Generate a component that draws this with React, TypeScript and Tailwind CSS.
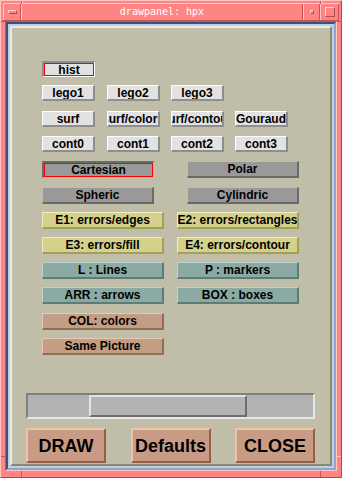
import React from "react";

type Tone = "light" | "gray" | "yellow" | "teal" | "tan";

// raised bevel per colour: face, light edge (top/left), dark edge (bottom/right)
const tones: Record<Tone, string> = {
    light: "bg-[#e2e2e2] border-t-white border-l-white border-b-[#8e8e8e] border-r-[#8e8e8e]",
    gray: "bg-[#999999] border-t-[#bcbcbc] border-l-[#bcbcbc] border-b-[#6a6a6a] border-r-[#6a6a6a]",
    yellow: "bg-[#d5d18b] border-t-[#efedc4] border-l-[#efedc4] border-b-[#a29f5a] border-r-[#a29f5a]",
    teal: "bg-[#8aaaa3] border-t-[#bcd3ce] border-l-[#bcd3ce] border-b-[#5c7c76] border-r-[#5c7c76]",
    tan: "bg-[#c49d85] border-t-[#e6c8b4] border-l-[#e6c8b4] border-b-[#956c55] border-r-[#956c55]",
};

const sunken: Record<Tone, string> = {
    light: "bg-[#e2e2e2] border-t-[#8e8e8e] border-l-[#8e8e8e] border-b-white border-r-white",
    gray: "bg-[#999999] border-t-[#6a6a6a] border-l-[#6a6a6a] border-b-[#bcbcbc] border-r-[#bcbcbc]",
    yellow: "",
    teal: "",
    tan: "",
};

function Btn({
    label,
    size,
    tone,
    selected = false,
}: {
    label: string;
    size: string;
    tone: Tone;
    selected?: boolean;
}) {
    if (selected) {
        return (
            <div className={`flex shrink-0 border-t-2 border-l-2 border-b border-r ${sunken[tone]} ${size}`}>
                <div className="flex flex-1 items-center justify-center overflow-hidden border border-[#ff0000]">
                    <span className="shrink-0 whitespace-nowrap text-[12px] font-bold leading-none text-black">{label}</span>
                </div>
            </div>
        );
    }
    return (
        <div
            className={`flex shrink-0 items-center justify-center overflow-hidden border-t border-l border-b-2 border-r-2 ${tones[tone]} ${size}`}
        >
            <span className="shrink-0 whitespace-nowrap text-[12px] font-bold leading-none text-black">{label}</span>
        </div>
    );
}

function BigBtn({ label }: { label: string }) {
    return (
        <div className="flex h-[35px] w-[80px] items-center justify-center border-2 border-t-[#e8c4ac] border-l-[#e8c4ac] border-b-[#965f45] border-r-[#965f45] bg-[#c89c84]">
            <span className="whitespace-nowrap text-[18px] font-bold leading-none text-black">{label}</span>
        </div>
    );
}

export default function App() {
    const small = "h-[16px] w-[53px]";
    return (
        <div className="relative flex h-[478px] w-[342px] flex-col border border-t-[#ffc6c6] border-l-[#ffc6c6] border-b-[#a84848] border-r-[#a84848] bg-[#ff8585] px-[2px] pt-[2px] pb-[6px] font-['Liberation_Sans',Arial,sans-serif]">
            {/* frame corner ticks */}
            <div className="absolute left-[20px] top-0 h-[3px] w-[1px] bg-[#c05656]" />
            <div className="absolute left-[21px] top-0 h-[3px] w-[1px] bg-[#ffc6c6]" />
            <div className="absolute left-[319px] top-0 h-[3px] w-[1px] bg-[#c05656]" />
            <div className="absolute left-[320px] top-0 h-[3px] w-[1px] bg-[#ffc6c6]" />
            <div className="absolute left-0 top-[20px] h-[1px] w-[4px] bg-[#c05656]" />
            <div className="absolute right-0 top-[20px] h-[1px] w-[4px] bg-[#c05656]" />
            <div className="absolute bottom-0 left-[20px] h-[6px] w-[1px] bg-[#c05656]" />
            <div className="absolute bottom-0 left-[319px] h-[6px] w-[1px] bg-[#c05656]" />
            <div className="absolute left-0 top-[455px] h-[1px] w-[5px] bg-[#c05656]" />
            <div className="absolute right-0 top-[455px] h-[1px] w-[5px] bg-[#ffc6c6]" />

            {/* title bar */}
            <div className="flex h-[18px] shrink-0 border-t border-b border-t-[#ffc6c6] border-b-[#c05656]">
                <div className="flex w-[18px] items-center justify-center border-l border-r border-l-[#ffc6c6] border-r-[#c05656]">
                    <div className="h-[4px] w-[9px] border border-t-[#ffd0d0] border-l-[#ffd0d0] border-b-[#b04c4c] border-r-[#b04c4c]" />
                </div>
                <div className="flex flex-1 items-center justify-center border-l border-r border-l-[#ffc6c6] border-r-[#c05656]">
                    <span className="font-['DejaVu_Sans_Mono',monospace] text-[10px] leading-none text-white">drawpanel: hpx</span>
                </div>
                <div className="flex w-[17px] items-center justify-center border-l border-r border-l-[#ffc6c6] border-r-[#c05656]">
                    <div className="h-[4px] w-[4px] border border-t-[#ffd0d0] border-l-[#ffd0d0] border-b-[#b04c4c] border-r-[#b04c4c]" />
                </div>
                <div className="flex w-[19px] items-center justify-center border-l border-r border-l-[#ffc6c6] border-r-[#c05656]">
                    <div className="h-[10px] w-[10px] border border-t-[#ffd0d0] border-l-[#ffd0d0] border-b-[#b04c4c] border-r-[#b04c4c]" />
                </div>
            </div>

            {/* client frame */}
            <div className="mx-[2px] flex flex-1 flex-col border border-t-[#c05656] border-l-[#c05656] border-b-[#ffc6c6] border-r-[#ffc6c6]">
                <div className="flex flex-1 flex-col border-2 border-t-[#3d5279] border-l-[#3d5279] border-b-[#8fa5cc] border-r-[#8fa5cc]">
                    <div className="flex flex-1 flex-col border-2 border-[#bccdee]">
                        <div className="flex flex-1 flex-col border-2 border-t-[#ebebdf] border-l-[#ebebdf] border-b-[#8b8a6a] border-r-[#8b8a6a] bg-[#c0bea8]">
                            <div className="ml-[30px] mt-[33px] flex">
                                <Btn label="hist" size={small} tone="light" selected />
                            </div>
                            <div className="ml-[30px] mt-[8px] flex">
                                <Btn label="lego1" size={small} tone="light" />
                                <div className="ml-[12px]"><Btn label="lego2" size={small} tone="light" /></div>
                                <div className="ml-[11px]"><Btn label="lego3" size={small} tone="light" /></div>
                            </div>
                            <div className="ml-[30px] mt-[10px] flex">
                                <Btn label="surf" size={small} tone="light" />
                                <div className="ml-[12px]"><Btn label="surf/colors" size={small} tone="light" /></div>
                                <div className="ml-[11px]"><Btn label="surf/contour" size={small} tone="light" /></div>
                                <div className="ml-[11px]"><Btn label="Gouraud" size={small} tone="light" /></div>
                            </div>
                            <div className="ml-[30px] mt-[9px] flex">
                                <Btn label="cont0" size={small} tone="light" />
                                <div className="ml-[12px]"><Btn label="cont1" size={small} tone="light" /></div>
                                <div className="ml-[11px]"><Btn label="cont2" size={small} tone="light" /></div>
                                <div className="ml-[11px]"><Btn label="cont3" size={small} tone="light" /></div>
                            </div>
                            <div className="ml-[30px] mt-[9px] flex">
                                <Btn label="Cartesian" size="h-[17px] w-[112px]" tone="gray" selected />
                                <div className="ml-[33px]"><Btn label="Polar" size="h-[17px] w-[112px]" tone="gray" /></div>
                            </div>
                            <div className="ml-[30px] mt-[9px] flex">
                                <Btn label="Spheric" size="h-[17px] w-[112px]" tone="gray" />
                                <div className="ml-[33px]"><Btn label="Cylindric" size="h-[17px] w-[112px]" tone="gray" /></div>
                            </div>
                            <div className="ml-[30px] mt-[8px] flex">
                                <Btn label="E1: errors/edges" size="h-[17px] w-[122px]" tone="yellow" />
                                <div className="ml-[13px]"><Btn label="E2: errors/rectangles" size="h-[17px] w-[122px]" tone="yellow" /></div>
                            </div>
                            <div className="ml-[30px] mt-[8px] flex">
                                <Btn label="E3: errors/fill" size="h-[17px] w-[122px]" tone="yellow" />
                                <div className="ml-[13px]"><Btn label="E4: errors/contour" size="h-[17px] w-[122px]" tone="yellow" /></div>
                            </div>
                            <div className="ml-[30px] mt-[8px] flex">
                                <Btn label="L : Lines" size="h-[17px] w-[122px]" tone="teal" />
                                <div className="ml-[13px]"><Btn label="P : markers" size="h-[17px] w-[122px]" tone="teal" /></div>
                            </div>
                            <div className="ml-[30px] mt-[8px] flex">
                                <Btn label="ARR : arrows" size="h-[17px] w-[122px]" tone="teal" />
                                <div className="ml-[13px]"><Btn label="BOX : boxes" size="h-[17px] w-[122px]" tone="teal" /></div>
                            </div>
                            <div className="ml-[30px] mt-[9px] flex">
                                <Btn label="COL: colors" size="h-[17px] w-[122px]" tone="tan" />
                            </div>
                            <div className="ml-[30px] mt-[8px] flex">
                                <Btn label="Same Picture" size="h-[17px] w-[122px]" tone="tan" />
                            </div>

                            {/* slider */}
                            <div className="ml-[14px] mt-[38px] flex h-[26px] w-[289px] items-center border-2 border-t-[#7f7f7f] border-l-[#7f7f7f] border-b-[#e6e6e6] border-r-[#e6e6e6] bg-[#b3b3b3]">
                                <div className="ml-[61px] h-[22px] w-[158px] border-2 border-t-[#e3e3e3] border-l-[#e3e3e3] border-b-[#6e6e6e] border-r-[#6e6e6e] bg-[#b3b3b3]" />
                            </div>

                            <div className="ml-[14px] mt-[9px] flex w-[289px] justify-between">
                                <BigBtn label="DRAW" />
                                <BigBtn label="Defaults" />
                                <BigBtn label="CLOSE" />
                            </div>
                        </div>
                    </div>
                </div>
            </div>
        </div>
    );
}
